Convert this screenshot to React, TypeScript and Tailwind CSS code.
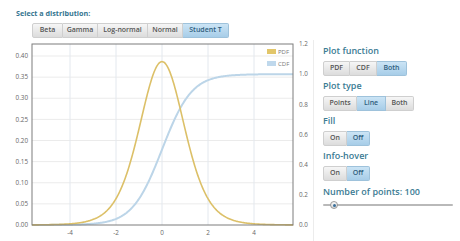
import React from "react";

const NU = 8;
const C = 0.38669;
const pdf = (x: number) => C * Math.pow(1 + (x * x) / NU, -(NU + 1) / 2);

// chart geometry (svg coords, svg starts at page y=40)
const X0 = 162;
const XS = 23;
const BOTTOM = 185;
const px = (x: number) => X0 + x * XS;
const pyL = (v: number) => BOTTOM - (v / 0.4) * 169;
const pyR = (c: number) => BOTTOM - (c / 1.2) * 181;

function buildPaths() {
  const xmin = -5.65;
  const xmax = 5.7;
  const n = 400;
  const dx = (xmax - xmin) / n;
  let cdf = 0.0004;
  let prev = pdf(xmin);
  const p: string[] = [];
  const c: string[] = [];
  for (let i = 0; i <= n; i++) {
    const x = xmin + i * dx;
    const f = pdf(x);
    if (i > 0) cdf += ((prev + f) / 2) * dx;
    prev = f;
    p.push(`${i === 0 ? "M" : "L"}${px(x).toFixed(2)},${pyL(f).toFixed(2)}`);
    c.push(`${i === 0 ? "M" : "L"}${px(x).toFixed(2)},${pyR(Math.min(cdf, 1)).toFixed(2)}`);
  }
  return { pdfPath: p.join(" "), cdfPath: c.join(" ") };
}

const { pdfPath, cdfPath } = buildPaths();

type Opt = { label: string; w: string; active?: boolean };

function Group({ items }: { items: Opt[] }) {
  return (
    <div className="flex h-[15px]">
      {items.map((it, i) => (
        <div
          key={it.label}
          className={[
            "flex items-center justify-center border text-[7px] font-semibold",
            it.w,
            i === 0 ? "rounded-l-[2px]" : "border-l-0",
            i === items.length - 1 ? "rounded-r-[2px]" : "",
            it.active
              ? "border-[#9ec2db] bg-gradient-to-b from-[#cbe4f5] to-[#a7cde8] text-[#2f5e7e]"
              : "border-[#cfcfcf] bg-gradient-to-b from-[#f6f6f6] to-[#dcdcdc] text-[#555]",
          ].join(" ")}
        >
          {it.label}
        </div>
      ))}
    </div>
  );
}

function Heading({ children }: { children: React.ReactNode }) {
  return <div className="text-[9px] font-semibold leading-[12px] text-[#3b7b93]">{children}</div>;
}

function Chart() {
  const leftTicks = [0, 0.05, 0.1, 0.15, 0.2, 0.25, 0.3, 0.35, 0.4];
  const rightTicks = [0, 0.2, 0.4, 0.6, 0.8, 1.0, 1.2];
  const xTicks = [-4, -2, 0, 2, 4];
  return (
    <svg width="313" height="201" className="block shrink-0">
      <rect x="32" y="4" width="261" height="181" fill="#fff" />
      {leftTicks.slice(1).map((t) => (
        <line key={t} x1="32" x2="293" y1={pyL(t)} y2={pyL(t)} stroke="#ebebeb" strokeWidth="1" />
      ))}
      {xTicks.map((t) => (
        <line key={t} x1={px(t)} x2={px(t)} y1="4" y2="185" stroke="#e3e8ee" strokeWidth="1" />
      ))}
      <path d={cdfPath} fill="none" stroke="#bcd5e8" strokeWidth="2" />
      <path d={pdfPath} fill="none" stroke="#dcc068" strokeWidth="1.6" />
      <rect x="32" y="4" width="261" height="181" fill="none" stroke="#7c7c7c" strokeWidth="1" />
      {leftTicks.map((t) => (
        <text key={t} x="28" y={pyL(t) + 2.2} textAnchor="end" fontSize="6.3" fill="#666" fontFamily="Open Sans, sans-serif">
          {t.toFixed(2)}
        </text>
      ))}
      {rightTicks.map((t) => (
        <text key={t} x="299" y={pyR(t) + 2.2} fontSize="6.3" fill="#666" fontFamily="Open Sans, sans-serif">
          {t.toFixed(1)}
        </text>
      ))}
      {xTicks.map((t) => (
        <text key={t} x={px(t)} y="195" textAnchor="middle" fontSize="6.3" fill="#666" fontFamily="Open Sans, sans-serif">
          {t}
        </text>
      ))}
      <rect x="267" y="9" width="9" height="5" fill="#e2c66a" />
      <text x="278" y="14" fontSize="6" fill="#777" fontFamily="Open Sans, sans-serif">PDF</text>
      <rect x="267" y="21" width="9" height="5" fill="#bfd8ec" />
      <text x="278" y="26" fontSize="6" fill="#777" fontFamily="Open Sans, sans-serif">CDF</text>
    </svg>
  );
}

export default function App() {
  return (
    <div className="h-[241px] w-[460px] overflow-hidden bg-white font-['Open_Sans',sans-serif]">
      <div className="h-[40px] pl-[16px] pt-[8px]">
        <div className="text-[7.2px] font-bold leading-[10px] text-[#34748f]">Select a distribution:</div>
        <div className="ml-[16px] mt-[5px]">
          <Group
            items={[
              { label: "Beta", w: "w-[31px]" },
              { label: "Gamma", w: "w-[35px]" },
              { label: "Log-normal", w: "w-[50px]" },
              { label: "Normal", w: "w-[35px]" },
              { label: "Student T", w: "w-[46px]", active: true },
            ]}
          />
        </div>
      </div>
      <div className="flex">
        <Chart />
        <div className="flex h-[201px] flex-1 flex-col border-l border-[#ececec] pl-[9px] pt-[5px]">
          <Heading>Plot function</Heading>
          <div className="mt-[4px]">
            <Group
              items={[
                { label: "PDF", w: "w-[27px]" },
                { label: "CDF", w: "w-[27px]" },
                { label: "Both", w: "w-[30px]", active: true },
              ]}
            />
          </div>
          <div className="mt-[4px]">
            <Heading>Plot type</Heading>
          </div>
          <div className="mt-[4px]">
            <Group
              items={[
                { label: "Points", w: "w-[34px]" },
                { label: "Line", w: "w-[29px]", active: true },
                { label: "Both", w: "w-[28px]" },
              ]}
            />
          </div>
          <div className="mt-[4px]">
            <Heading>Fill</Heading>
          </div>
          <div className="mt-[4px]">
            <Group
              items={[
                { label: "On", w: "w-[24px]" },
                { label: "Off", w: "w-[23px]", active: true },
              ]}
            />
          </div>
          <div className="mt-[4px]">
            <Heading>Info-hover</Heading>
          </div>
          <div className="mt-[4px]">
            <Group
              items={[
                { label: "On", w: "w-[24px]" },
                { label: "Off", w: "w-[23px]", active: true },
              ]}
            />
          </div>
          <div className="mt-[5px]">
            <Heading>Number of points: 100</Heading>
          </div>
          <div className="relative mt-[3px] h-[8px] w-[130px]">
            <div className="absolute left-0 right-0 top-[3px] h-[2px] rounded-full bg-[#b9b9b9]" />
            <div className="absolute left-[7px] top-0 flex h-[8px] w-[8px] items-center justify-center rounded-full border border-[#9a9a9a] bg-gradient-to-b from-[#fafafa] to-[#d8d8d8]">
              <div className="h-[3px] w-[3px] rounded-full bg-[#3a6f9a]" />
            </div>
          </div>
        </div>
      </div>
    </div>
  );
}
